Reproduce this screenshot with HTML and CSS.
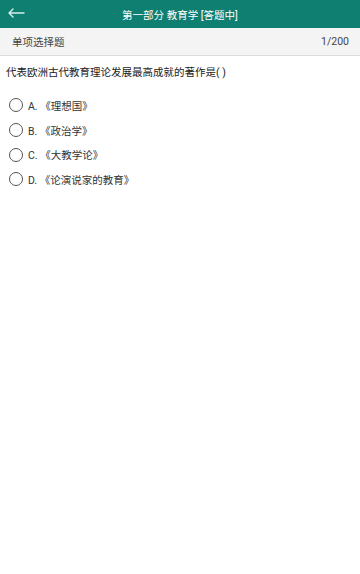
FILE: index.html
```html
<!DOCTYPE html>
<html lang="zh-CN">
<head>
    <meta charset="UTF-8">
    <meta name="viewport" content="width=device-width, initial-scale=1.0">
    <title>答题</title>
    <link rel="stylesheet" href="styles.css">
</head>
<body>
    <div class="header">
        <span class="back">
            <svg width="18" height="10" viewBox="0 0 18 10">
                <path d="M17 5H2M6 1L2 5L6 9" fill="none" stroke="#d6f0ec" stroke-width="1.4" stroke-linecap="round" stroke-linejoin="round"/>
            </svg>
        </span>
        <h1>第一部分 教育学 [答题中]</h1>
    </div>

    <div class="sub-bar">
        <span>单项选择题</span>
        <span>1/200</span>
    </div>

    <p class="question">代表欧洲古代教育理论发展最高成就的著作是( )</p>

    <div class="options">
        <div class="option"><span class="radio"></span>A. 《理想国》</div>
        <div class="option"><span class="radio"></span>B. 《政治学》</div>
        <div class="option"><span class="radio"></span>C. 《大教学论》</div>
        <div class="option"><span class="radio"></span>D. 《论演说家的教育》</div>
    </div>
</body>
</html>
```

FILE: styles.css
```css
body {
    margin: 0;
    padding: 0;
    background-color: #fff;
    font-family: Roboto, "Noto Sans CJK SC", sans-serif;
    color: #333;
}
.header {
    position: relative;
    height: 28px;
    background-color: #0f7f72;
    display: flex;
    align-items: center;
    justify-content: center;
}
.header h1 {
    margin: 0;
    font-size: 10.5px;
    font-weight: normal;
    color: #fff;
}
.back {
    position: absolute;
    left: 7px;
    top: 8px;
    line-height: 0;
}
.sub-bar {
    height: 27px;
    background-color: #f4f4f4;
    border-bottom: 1px solid #dcdcdc;
    display: flex;
    justify-content: space-between;
    align-items: center;
    padding: 0 11px 0 12px;
    font-size: 10.5px;
    color: #444;
}
.question {
    margin: 0;
    padding: 8px 6px 0 6px;
    font-size: 10.5px;
    color: #222;
}
.options {
    padding: 14px 0 0 9px;
}
.option {
    display: flex;
    align-items: center;
    height: 24.7px;
    font-size: 10.5px;
    color: #333;
}
.radio {
    width: 12px;
    height: 12px;
    border: 1.5px solid #555;
    border-radius: 50%;
    margin-right: 5px;
}
```
